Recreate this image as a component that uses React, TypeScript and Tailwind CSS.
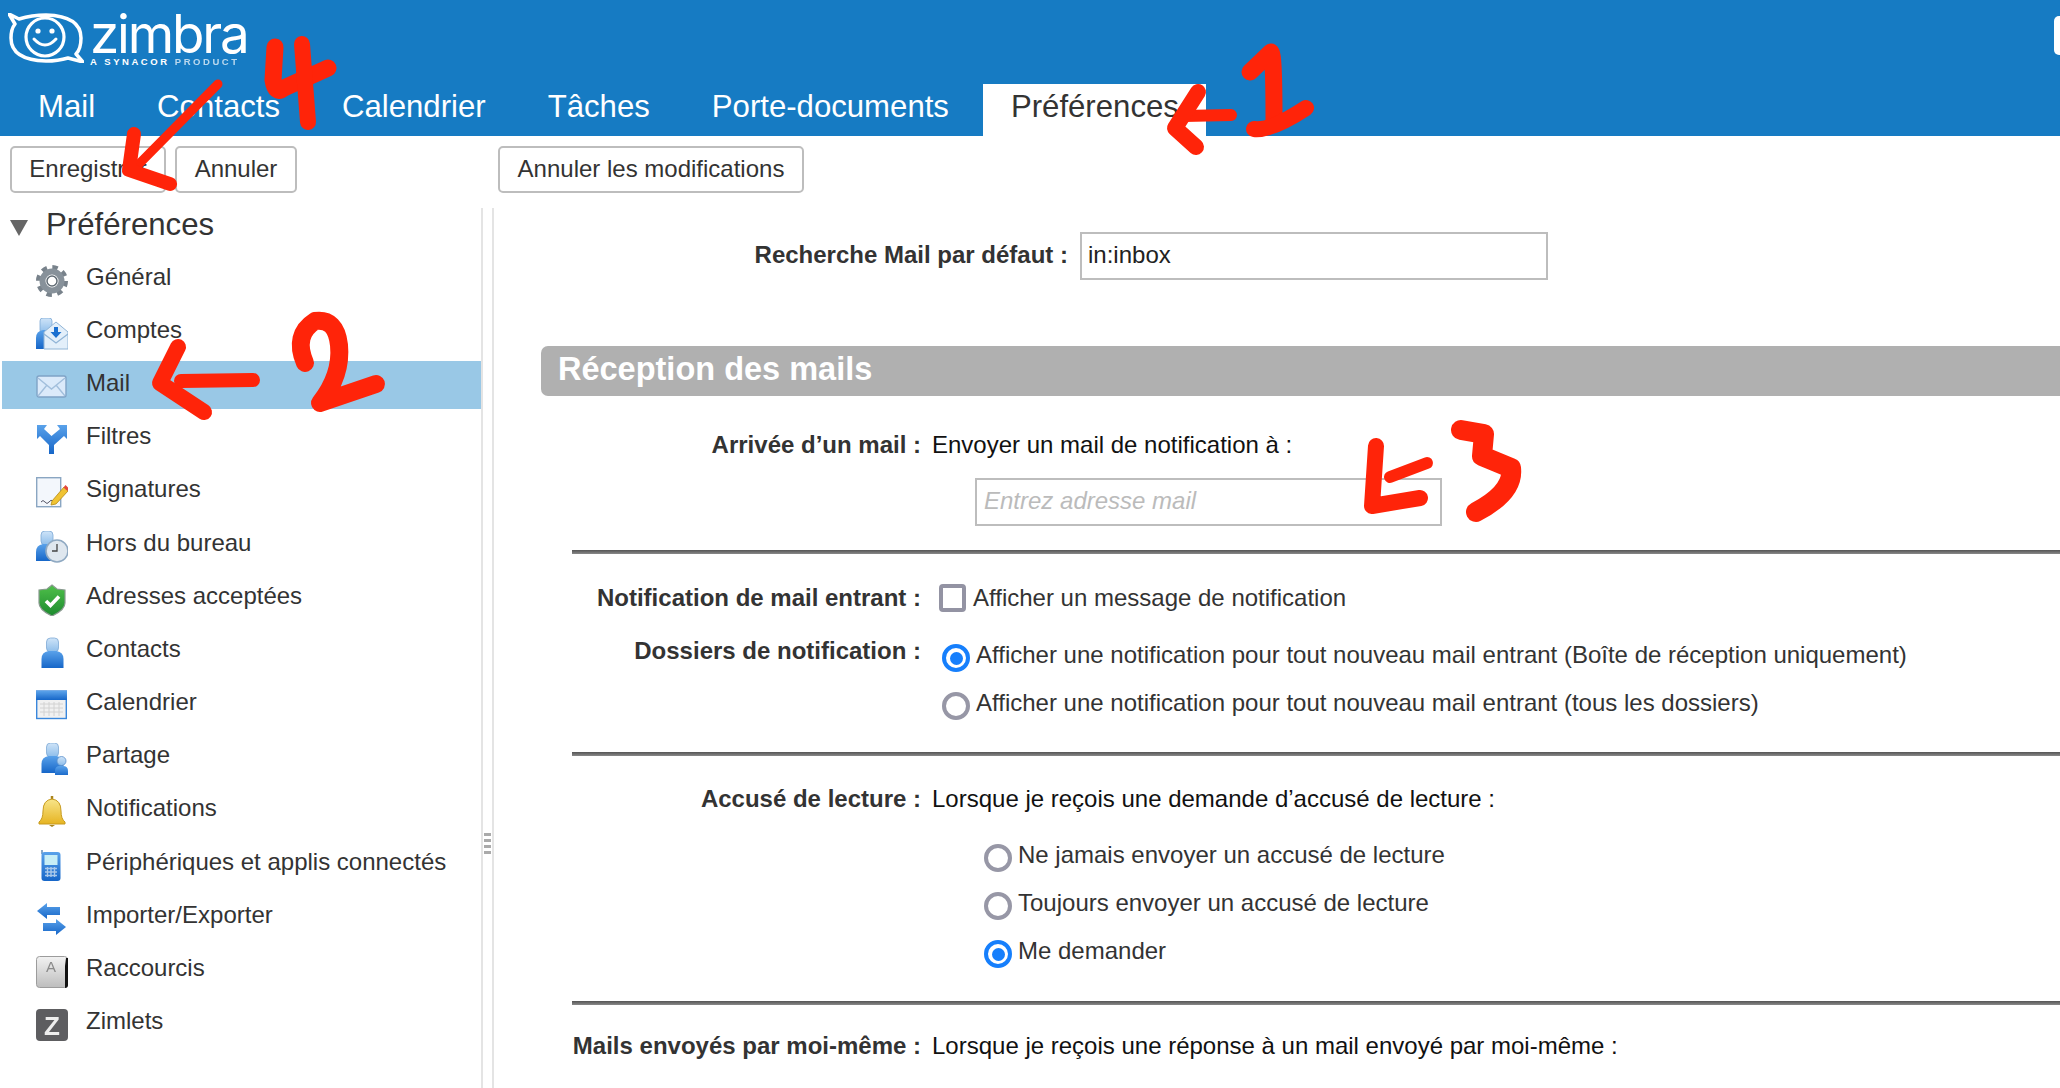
import React from "react";

const Defs = () => (
  <svg width="0" height="0" className="absolute">
    <defs>
      <linearGradient id="blueG" x1="0" y1="0" x2="0" y2="1">
        <stop offset="0" stopColor="#5aa2ea" />
        <stop offset="1" stopColor="#1666c8" />
      </linearGradient>
      <linearGradient id="headG" x1="0" y1="0" x2="0" y2="1">
        <stop offset="0" stopColor="#cfe4f8" />
        <stop offset="1" stopColor="#8dbdea" />
      </linearGradient>
      <linearGradient id="bellG" x1="0" y1="0" x2="0" y2="1">
        <stop offset="0" stopColor="#f8e58a" />
        <stop offset="1" stopColor="#e6b422" />
      </linearGradient>
      <linearGradient id="shieldG" x1="0" y1="0" x2="0" y2="1">
        <stop offset="0" stopColor="#4fc04a" />
        <stop offset="1" stopColor="#1c8a2e" />
      </linearGradient>
      <linearGradient id="keyG" x1="0" y1="0" x2="0" y2="1">
        <stop offset="0" stopColor="#f2f2f2" />
        <stop offset="1" stopColor="#bdbdbd" />
      </linearGradient>
    </defs>
  </svg>
);

const Person = ({ x = 0, y = 0, s = 1 }: { x?: number; y?: number; s?: number }) => (
  <g transform={`translate(${x} ${y}) scale(${s})`}>
    <rect x="5" y="0" width="12" height="14" rx="4" fill="url(#headG)" stroke="#7fa9d6" strokeWidth="0.8" />
    <path d="M0 30 V21 Q0 14 7 13 H15 Q22 14 22 21 V30 Z" fill="url(#blueG)" />
  </g>
);

const icons: Record<string, React.ReactNode> = {
  gear: (
    <g>
      <circle cx="16" cy="16" r="13" fill="none" stroke="#78828b" strokeWidth="6" strokeDasharray="5.1 5.1" />
      <circle cx="16" cy="16" r="9.5" fill="none" stroke="#87919a" strokeWidth="6" />
      <circle cx="16" cy="16" r="5" fill="#fff" stroke="#5f6a73" strokeWidth="1.5" />
    </g>
  ),
  comptes: (
    <g>
      <rect x="4" y="0" width="12" height="15" rx="3" fill="url(#headG)" stroke="#7fa9d6" strokeWidth="0.8" />
      <path d="M0 31 V20 Q0 13 7 12 H14 V31 Z" fill="url(#blueG)" />
      <path d="M8 14 L20 4 L32 14 V31 H8 Z" fill="#e3effa" stroke="#90b4d6" strokeWidth="1" />
      <path d="M8 16 L20 25 L32 16" fill="none" stroke="#90b4d6" strokeWidth="1.2" />
      <path d="M18 9 H22 V14 H25.5 L20 20 L14.5 14 H18 Z" fill="#1a6fd0" />
    </g>
  ),
  mail: (
    <g>
      <rect x="1" y="5" width="29" height="21" rx="2" fill="#dbeafa" stroke="#7fa3c6" strokeWidth="1.4" />
      <path d="M2 7 L15.5 18 L29 7 M2 25 L11 14 M29 25 L20 14" fill="none" stroke="#a2bfdc" strokeWidth="1.4" />
    </g>
  ),
  filtres: (
    <g>
      <path d="M13 30 H18 V21 L28 12 L31 15 V1 H21 L24 5 L15.5 12 L8 5 L11 1 H1 V15 L4 12 L13 21 Z" fill="url(#blueG)" />
    </g>
  ),
  signatures: (
    <g>
      <rect x="0.7" y="0.7" width="24" height="29" fill="#f3f7fc" stroke="#8aa6c2" strokeWidth="1.4" />
      <path d="M5 25 q2 -3 4 0 t4 0 t4 -1" fill="none" stroke="#556" strokeWidth="1" />
      <path d="M16 24 L28 10 L32 14 L20 27 L15 28 Z" fill="#f0c332" stroke="#b48a14" strokeWidth="0.8" />
      <path d="M27.5 10.5 L29.5 8 L32.5 11 L31.5 14 Z" fill="#e2483c" />
    </g>
  ),
  hors: (
    <g>
      <Person x={0} y={0} />
      <circle cx="21" cy="20" r="11" fill="#dfe7ef" stroke="#8fa9c2" strokeWidth="1.6" />
      <path d="M21 13 V20 H16" fill="none" stroke="#444" strokeWidth="1.3" />
    </g>
  ),
  shield: (
    <g>
      <path d="M16 1 L21 5 L29 6 V19 Q29 26 16 32 Q3 26 3 19 V6 L11 5 Z" fill="url(#shieldG)" stroke="#8a9a90" strokeWidth="1.2" />
      <path d="M10 17 L14.5 21.5 L23 12.5" fill="none" stroke="#fff" strokeWidth="3.6" />
    </g>
  ),
  contacts: <Person x={5.5} y={1} />,
  calendrier: (
    <g>
      <rect x="0.7" y="1" width="29.6" height="27.5" fill="#f1f1f1" stroke="#3a87dc" strokeWidth="1.4" />
      <rect x="0" y="1" width="31" height="9" fill="url(#blueG)" />
      <path d="M4 14 H27 M4 18 H27 M4 22 H27 M8 12 V26 M13 12 V26 M18 12 V26 M23 12 V26" stroke="#d2d2d2" strokeWidth="1" />
    </g>
  ),
  partage: (
    <g>
      <Person x={5.5} y={0} />
      <g transform="translate(19 13)">
        <circle cx="6.5" cy="5" r="4.5" fill="url(#headG)" stroke="#5a8fcc" strokeWidth="0.8" />
        <path d="M0 20 V15 Q0 10 5 10 H8 Q13 10 13 15 V20 Z" fill="url(#blueG)" />
      </g>
    </g>
  ),
  bell: (
    <g>
      <path d="M16 0 V4" stroke="#a9841c" strokeWidth="2.5" />
      <path d="M16 3 Q25 4 25 15 Q25 23 29 26 V28 H3 V26 Q7 23 7 15 Q7 4 16 3 Z" fill="url(#bellG)" stroke="#c79a1e" strokeWidth="1" />
      <path d="M13 29 H19 L16 31 Z" fill="#a9841c" />
    </g>
  ),
  phone: (
    <g>
      <path d="M6 0 V4" stroke="#3a6ea5" strokeWidth="1.2" />
      <rect x="5.5" y="2" width="19" height="29" rx="3" fill="url(#blueG)" />
      <rect x="8.5" y="5" width="13" height="10" fill="#c7eef6" />
      <path d="M9 18.5 H21 M9 22 H21 M9 25.5 H21 M11.5 17 V27 M15 17 V27 M18.5 17 V27" stroke="#a8c8ea" strokeWidth="1.4" />
    </g>
  ),
  importer: (
    <g fill="url(#blueG)">
      <path d="M1 8 L11 0 V4 H24 V12 H11 V16 Z" />
      <path d="M30 24 L20 32 V28 H7 V20 H20 V16 Z" />
    </g>
  ),
  raccourcis: (
    <g>
      <rect x="0.5" y="0.5" width="31" height="31" rx="3" fill="url(#keyG)" stroke="#9c9c9c" />
      <path d="M30 2 H32 V29 Q32 32 29 32 V10 Z" fill="#111" />
      <text x="15" y="16" textAnchor="middle" fontSize="15" fill="#8a8a8a" fontFamily="Liberation Sans">A</text>
    </g>
  ),
  zimlets: (
    <g>
      <rect x="0" y="0" width="32" height="32" rx="4" fill="#5d5d60" />
      <text x="16" y="26" textAnchor="middle" fontSize="26" fontWeight="700" fill="#ededed" fontFamily="Liberation Sans">Z</text>
    </g>
  ),
};

const navItems = ["Mail", "Contacts", "Calendrier", "Tâches", "Porte-documents"];

const sideItems: [string, string][] = [
  ["Général", "gear"],
  ["Comptes", "comptes"],
  ["Mail", "mail"],
  ["Filtres", "filtres"],
  ["Signatures", "signatures"],
  ["Hors du bureau", "hors"],
  ["Adresses acceptées", "shield"],
  ["Contacts", "contacts"],
  ["Calendrier", "calendrier"],
  ["Partage", "partage"],
  ["Notifications", "bell"],
  ["Périphériques et applis connectés", "phone"],
  ["Importer/Exporter", "importer"],
  ["Raccourcis", "raccourcis"],
  ["Zimlets", "zimlets"],
];

const Button = ({ children, className = "" }: { children: React.ReactNode; className?: string }) => (
  <button className={`h-[47px] border-2 border-[#bdbdbd] rounded-[5px] bg-white text-[#333] text-[24px] pb-[2px] flex items-center justify-center ${className}`}>
    {children}
  </button>
);

const Radio = ({ on = false }: { on?: boolean }) =>
  on ? (
    <span className="w-[28px] h-[28px] rounded-full border-[4px] border-[#167ffc] flex items-center justify-center shrink-0">
      <span className="w-[13px] h-[13px] rounded-full bg-[#167ffc]" />
    </span>
  ) : (
    <span className="w-[28px] h-[28px] rounded-full border-[4px] border-[#9797a6] bg-white shrink-0" />
  );

const Label = ({ children }: { children: React.ReactNode }) => (
  <div className="w-[349px] shrink-0 text-right font-bold text-[#333] whitespace-nowrap">{children}</div>
);

const Hr = ({ className = "" }: { className?: string }) => (
  <div className={`ml-[31px] h-[4px] bg-gradient-to-b from-[#555] to-[#8a8a8a] ${className}`} />
);

const RadioRow = ({ on, children, className = "" }: { on?: boolean; children: React.ReactNode; className?: string }) => (
  <div className={`flex items-center h-[28px] ${className}`}>
    <Radio on={on} />
    <span className="ml-[6px] -mt-[6px] text-[#333] whitespace-nowrap">{children}</span>
  </div>
);

const Logo = () => (
  <div className="flex items-start pl-[8px] pt-[13px] h-[84px]">
    <svg width="76" height="50" viewBox="0 0 76 50" fill="none" stroke="#fff">
      <path d="M1 1 L11 6 Q24 2 38 2 Q73 3 73 25 Q73 36 68 41 L75 49 L60 45 Q50 48 38 48 Q3 47 3 25 Q3 16 7 11 Z" strokeWidth="3.5" strokeLinejoin="round" />
      <circle cx="37" cy="24" r="19" strokeWidth="3.2" />
      <circle cx="30" cy="18" r="2.6" fill="#fff" stroke="none" />
      <circle cx="44" cy="18" r="2.6" fill="#fff" stroke="none" />
      <path d="M26 26 Q37 38 48 26" strokeWidth="3" strokeLinecap="round" />
    </svg>
    <div className="ml-[6px] flex flex-col text-white">
      <span className="text-[53px] leading-[42px] font-['Inter',sans-serif] font-normal tracking-[-2.2px] h-[44px]">zimbra</span>
      <span className="text-[9.5px] leading-[10px] font-bold tracking-[2.55px] whitespace-nowrap">
        A SYNACOR <span className="opacity-70">PRODUCT</span>
      </span>
    </div>
  </div>
);

export default function App() {
  return (
    <div className="relative w-[2060px] h-[1088px] overflow-hidden bg-white font-['Liberation_Sans',Arial,sans-serif] text-[24px] leading-[30px]">
      <Defs />
      <header className="h-[136px] bg-[#167bc3] relative">
        <Logo />
        <div className="absolute right-0 top-[16px] w-[6px] h-[39px] bg-white rounded-l-[5px]" />
        <nav className="flex items-stretch h-[52px] pl-[7px] text-[31.15px]">
          {navItems.map((n) => (
            <div key={n} className="px-[31px] pt-[8px] text-white whitespace-nowrap">{n}</div>
          ))}
          <div className="ml-[3px] w-[223px] pl-[28px] pt-[8px] bg-white text-[#333]">Préférences</div>
        </nav>
      </header>

      <div className="flex h-[69px] pl-[10px] pt-[10px]">
        <Button className="w-[156px]">Enregistrer</Button>
        <Button className="w-[122px] ml-[9px]">Annuler</Button>
        <Button className="w-[306px] ml-[201px]">Annuler les modifications</Button>
      </div>

      <div className="flex h-[883px]">
        <aside className="w-[481px] pl-[2px] mt-[3px] shrink-0">
          <div className="flex items-center h-[34px] text-[#333] text-[31.2px]">
            <svg width="18" height="16" viewBox="0 0 18 16" className="ml-[8px] mt-[6px]"><path d="M0 0 H18 L9 16 Z" fill="#666" /></svg>
            <span className="ml-[18px]">Préférences</span>
          </div>
          <ul className="mt-[12.6px] flex flex-col gap-[5.2px]">
            {sideItems.map(([t, ic]) => (
              <li key={t} className={`h-[48px] flex items-center pl-[34px] ${t === "Mail" ? "bg-[#99c8e6]" : ""}`}>
                <svg width="32" height="32" viewBox="0 0 32 32" className="mt-[4px] shrink-0 blur-[0.4px]">{icons[ic]}</svg>
                <span className="ml-[18px] -mt-[4px] text-[#333] whitespace-nowrap">{t}</span>
              </li>
            ))}
          </ul>
        </aside>
        <div className="w-[13px] mt-[3px] shrink-0 border-l-2 border-r-2 border-[#e4e4e4] pl-[1px] pt-[625px] flex flex-col gap-[3px]">
          {[0, 1, 2, 3].map((i) => (
            <span key={i} className="w-[7px] h-[3px] bg-[#aaa]" />
          ))}
        </div>

        <main className="flex-1 pl-[47px] min-w-0">
          <div className="flex items-center mt-[27px] h-[48px]">
            <div className="w-[527px] text-right font-bold text-[#333] pb-[2px] whitespace-nowrap">Recherche Mail par défaut :</div>
            <input readOnly value="in:inbox" className="ml-[12px] w-[468px] h-[48px] border-2 border-[#bdbdbd] pl-[6px] pb-[2px] text-[#222] outline-none" />
          </div>

          <div className="mt-[66px] h-[50px] bg-[#b0b0b0] rounded-l-[7px] pl-[17px] flex items-center text-white font-bold text-[32.5px] pb-[4px]">Réception des mails</div>

          <div className="ml-[31px] mt-[33px] h-[34px] flex items-center pb-[2px]">
            <Label>Arrivée d’un mail :</Label>
            <span className="ml-[11px] text-[#111]">Envoyer un mail de notification à :</span>
          </div>
          <input readOnly placeholder="Entrez adresse mail" className="block ml-[434px] mt-[15px] w-[467px] h-[48px] border-2 border-[#bdbdbd] pl-[7px] pb-[2px] outline-none italic placeholder:text-[#bbb]" />
          <Hr className="mt-[24px]" />

          <div className="ml-[31px] mt-[30px] flex items-center h-[28px]">
            <Label>Notification de mail entrant :</Label>
            <span className="ml-[18px] w-[27px] h-[28px] border-[4px] border-[#9393a3] rounded-[4px] shrink-0" />
            <span className="ml-[7px] text-[#333] whitespace-nowrap">Afficher un message de notification</span>
          </div>

          <div className="ml-[31px] mt-[32px] flex">
            <div className="-mt-[8px]"><Label>Dossiers de notification :</Label></div>
            <div className="ml-[21px]">
              <RadioRow on>Afficher une notification pour tout nouveau mail entrant (Boîte de réception uniquement)</RadioRow>
              <RadioRow className="mt-[20px]">Afficher une notification pour tout nouveau mail entrant (tous les dossiers)</RadioRow>
            </div>
          </div>
          <Hr className="mt-[32px]" />

          <div className="ml-[31px] mt-[27px] h-[34px] flex items-center pb-[2px]">
            <Label>Accusé de lecture :</Label>
            <span className="ml-[11px] text-[#111] whitespace-nowrap">Lorsque je reçois une demande d’accusé de lecture :</span>
          </div>
          <div className="ml-[443px] mt-[27px] flex flex-col gap-[20px]">
            <RadioRow>Ne jamais envoyer un accusé de lecture</RadioRow>
            <RadioRow>Toujours envoyer un accusé de lecture</RadioRow>
            <RadioRow on>Me demander</RadioRow>
          </div>
          <Hr className="mt-[33px]" />

          <div className="ml-[31px] mt-[25px] h-[34px] flex items-center pb-[2px]">
            <Label>Mails envoyés par moi-même :</Label>
            <span className="ml-[11px] text-[#111] whitespace-nowrap">Lorsque je reçois une réponse à un mail envoyé par moi-même :</span>
          </div>
        </main>
      </div>

      <svg className="absolute inset-0 pointer-events-none" width="2060" height="1088" viewBox="0 0 2060 1088" fill="none" stroke="#ff2409" strokeLinecap="round" strokeLinejoin="round">
        {/* 1 */}
        <path d="M1250 72 L1271 52 Q1274 54 1274 120" strokeWidth="17" />
        <path d="M1254 129 Q1271 131 1306 108" strokeWidth="16" />
        <path d="M1231 115 L1184 116" strokeWidth="12" />
        <path d="M1198 92 L1175 128 L1196 147" strokeWidth="16" />
        {/* 4 */}
        <path d="M275 47 L273 80 Q275 95 284 88 L328 68" strokeWidth="17" />
        <path d="M302 44 L308 122" strokeWidth="16" />
        <path d="M218 84 L135 168" strokeWidth="9" />
        <path d="M134 134 L129 170 L170 184" strokeWidth="14" />
        {/* 2 */}
        <path d="M305 363 Q293 335 315 321 Q336 318 339 345 Q342 375 320 403 L376 384" strokeWidth="18" />
        <path d="M253 380 L181 381" strokeWidth="14" />
        <path d="M178 347 L160 383 L204 412" strokeWidth="16" />
        {/* 3 */}
        <path d="M1461 430 L1484 434 L1482 456 L1511 468 Q1514 492 1476 512" strokeWidth="20" />
        <path d="M1376 446 L1372 506 L1420 498" strokeWidth="16" />
        <path d="M1427 463 L1390 477" strokeWidth="12" />
      </svg>
    </div>
  );
}
